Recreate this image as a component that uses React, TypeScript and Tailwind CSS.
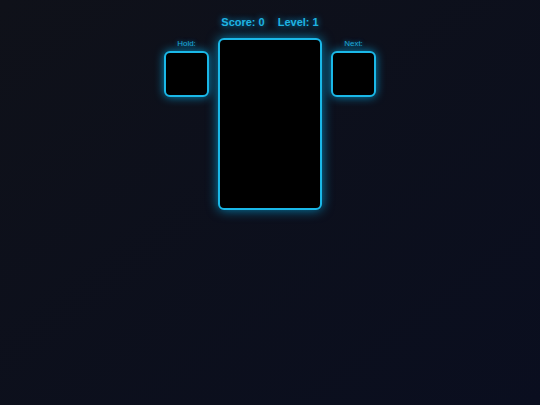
export default function App() {
  return (
    <div
      className="w-[540px] h-[405px] overflow-hidden bg-gradient-to-br from-[#0f1119] to-[#0a0e1f] flex flex-col items-center pt-[15px]"
      style={{ fontFamily: '"Liberation Sans", Arial, sans-serif' }}
    >
      {/* Score bar */}
      <div className="flex gap-[13px] text-[11px] leading-[14px] font-bold text-[#1fb4e2] [text-shadow:0_0_6px_rgba(0,180,255,0.8)]">
        <span>Score: 0</span>
        <span>Level: 1</span>
      </div>

      <div className="flex items-start gap-[9px] mt-[9px]">
        {/* Hold */}
        <div className="flex flex-col items-center pt-[1px]">
          <span className="text-[8px] leading-[9px] text-[#1fa9d6] [text-shadow:0_0_4px_rgba(0,180,255,0.7)]">Hold:</span>
          <div className="mt-[3px] w-[45px] h-[46px] bg-black border-2 border-[#1ab8e8] rounded-[6px] shadow-[0_0_10px_rgba(0,190,255,0.7)]" />
        </div>

        {/* Board */}
        <div className="w-[104px] h-[172px] bg-black border-2 border-[#1ab8e8] rounded-[6px] shadow-[0_0_12px_rgba(0,190,255,0.65)]" />

        {/* Next */}
        <div className="flex flex-col items-center pt-[1px]">
          <span className="text-[8px] leading-[9px] text-[#1fa9d6] [text-shadow:0_0_4px_rgba(0,180,255,0.7)]">Next:</span>
          <div className="mt-[3px] w-[45px] h-[46px] bg-black border-2 border-[#1ab8e8] rounded-[6px] shadow-[0_0_10px_rgba(0,190,255,0.7)]" />
        </div>
      </div>
    </div>
  );
}
